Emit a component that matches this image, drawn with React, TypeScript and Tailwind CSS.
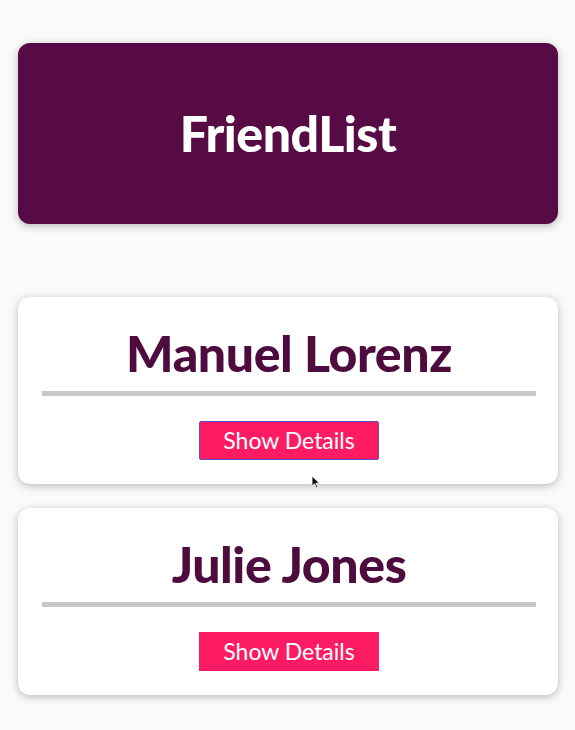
import React from "react";

function Card({ name, focused }: { name: string; focused?: boolean }) {
  return (
    <div className="bg-white rounded-[12px] shadow-[0_2px_8px_rgba(0,0,0,0.26)] pl-6 pr-[22px] pt-[26px] pb-6 flex flex-col items-center">
      <h2 className="text-[50px] leading-[60px] font-black text-[#4d0b3e] tracking-[-0.4px]">{name}</h2>
      <div className="w-full h-[5px] bg-[#c8c8c8] mt-[8px]" />
      <button
        className={
          "mt-[25px] w-[180px] h-[39px] bg-[#fd1c64] text-white text-[23px] leading-none flex items-center justify-center " +
          (focused ? "border-[1.5px] border-[#5a50c9] rounded-[2px]" : "border-[1.5px] border-[#fd1c64]")
        }
      >
        Show Details
      </button>
    </div>
  );
}

export default function App() {
  return (
    <div
      className="min-h-[730px] bg-[#fafafa] pl-[18px] pr-[17px] pt-[43px] relative"
      style={{ fontFamily: "Lato, 'Open Sans', sans-serif" }}
    >
      <header className="h-[181px] bg-[#560b44] rounded-[12px] shadow-[0_2px_8px_rgba(0,0,0,0.26)] flex items-center justify-center">
        <h1 className="text-[50px] font-black text-white tracking-[-0.5px]">FriendList</h1>
      </header>
      <div className="mt-[73px] flex flex-col gap-[24px]">
        <Card name="Manuel Lorenz" focused />
        <Card name="Julie Jones" />
      </div>
      <svg className="absolute left-[311px] top-[475px]" width="10" height="14" viewBox="0 0 10 14">
        <path d="M1 1 L1 11 L3.5 8.8 L5.5 13 L7 12.3 L5 8.2 L8.5 8.2 Z" fill="#111" stroke="#fff" strokeWidth="0.8" />
      </svg>
    </div>
  );
}
